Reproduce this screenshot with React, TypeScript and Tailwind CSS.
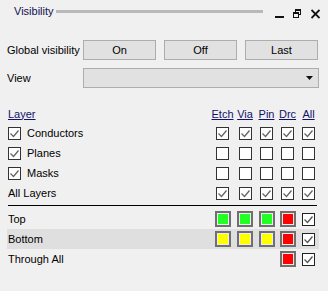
const cols = ['w-[23px]', 'w-[22px]', 'w-[21px]', 'w-[21px]', 'w-[21px]'];

const layerRows = [
  { name: 'Conductors', box: true, checks: [true, true, true, true, true] },
  { name: 'Planes', box: true, checks: [false, false, false, false, false] },
  { name: 'Masks', box: true, checks: [false, false, false, false, false] },
  { name: 'All Layers', box: false, checks: [true, true, true, true, true] },
];

const sideRows = [
  { name: 'Top', colors: ['#22ff22', '#22ff22', '#22ff22', '#ff0000'], active: false },
  { name: 'Bottom', colors: ['#ffff00', '#ffff00', '#ffff00', '#ff0000'], active: true },
  { name: 'Through All', colors: [null, null, null, '#ff0000'], active: false },
];

function Check({ on, dark }: { on: boolean; dark?: boolean }) {
  return (
    <div className={`w-[13px] h-[13px] border ${dark ? 'border-[#222]' : 'border-[#333]'} bg-white flex items-center justify-center`}>
      {on && (
        <svg width="11" height="11" viewBox="0 0 11 11">
          <polyline points="1.5,5.5 4.5,8.5 9.5,2.5" fill="none" stroke={dark ? '#555' : '#666'} strokeWidth="1.3" />
        </svg>
      )}
    </div>
  );
}

function Swatch({ color }: { color: string }) {
  return (
    <div className="w-[16px] h-[16px] border-2 border-[#6f6f6f] p-[1px] bg-[#ececec]">
      <div className="w-full h-full" style={{ backgroundColor: color }} />
    </div>
  );
}

export default function App() {
  return (
    <div
      className="w-[328px] h-[291px] bg-[#f0f0f0] text-[11px] text-black overflow-hidden"
      style={{ fontFamily: '"Liberation Sans", Arial, sans-serif' }}
    >
      {/* Title bar */}
      <div className="h-[22px] flex items-center pl-[14px]">
        <span className="text-[#101050]">Visibility</span>
        <div className="ml-[2px] w-[207px] h-[3px] bg-[#b9b9b9]" />
        <div className="ml-[12px] flex items-center">
          <svg width="9" height="16" viewBox="0 0 9 16">
            <rect x="0" y="13" width="9" height="2" fill="#111" />
          </svg>
          <svg className="ml-[9px]" width="8" height="16" viewBox="0 0 8 16">
            <rect x="2.5" y="6.5" width="5" height="5" fill="none" stroke="#111" strokeWidth="1" />
            <rect x="2" y="6" width="6" height="2" fill="#111" />
            <rect x="0.5" y="9.5" width="5" height="5" fill="#f0f0f0" stroke="#111" strokeWidth="1" />
            <rect x="0" y="9" width="6" height="2" fill="#111" />
          </svg>
          <svg className="ml-[10px]" width="9" height="16" viewBox="0 0 9 16">
            <path d="M0.5 7 L8.5 15 M8.5 7 L0.5 15" stroke="#111" strokeWidth="1.8" />
          </svg>
        </div>
      </div>

      {/* Global visibility */}
      <div className="mt-[18px] pl-[7px] flex items-center h-[20px]">
        <div className="w-[76px]">Global visibility</div>
        <div className="flex gap-[8px]">
          {['On', 'Off', 'Last'].map((b) => (
            <button key={b} className="w-[73px] h-[20px] bg-[#e1e1e1] border border-[#adadad] flex items-center justify-center">
              {b}
            </button>
          ))}
        </div>
      </div>

      {/* View */}
      <div className="mt-[8px] pl-[7px] flex items-center h-[20px]">
        <div className="w-[76px]">View</div>
        <div className="w-[236px] h-[20px] bg-[#e1e1e1] border border-[#adadad] flex items-center justify-end pr-[5px]">
          <svg width="7" height="4" viewBox="0 0 7 4">
            <polygon points="0,0 7,0 3.5,4" fill="#111" />
          </svg>
        </div>
      </div>

      {/* Layer table */}
      <div className="mt-[17px] pl-[8px] pr-[9px]">
        <div className="h-[18px] flex items-center">
          <div className="flex-1 underline text-[#10106a]">Layer</div>
          {['Etch', 'Via', 'Pin', 'Drc', 'All'].map((h, i) => (
            <div key={h} className={`${cols[i]} text-center underline text-[#10106a]`}>
              {h}
            </div>
          ))}
        </div>
        {layerRows.map((r) => (
          <div key={r.name} className="h-[20px] flex items-center">
            <div className="flex-1 flex items-center gap-[6px]">
              {r.box && <Check on={true} />}
              <span>{r.name}</span>
            </div>
            {r.checks.map((c, i) => (
              <div key={i} className={`${cols[i]} flex justify-center`}>
                <Check on={c} />
              </div>
            ))}
          </div>
        ))}
        <div className="mt-[2px] mr-[2px] h-[1px] bg-black" />
      </div>

      {/* Sides */}
      <div className="mt-[3px] ml-[7px] mr-[9px]">
        {sideRows.map((r) => (
          <div key={r.name} className={`h-[20px] flex items-center ${r.active ? 'bg-[#dfdfdf]' : ''}`}>
            <div className="flex-1 pl-[1px]">{r.name}</div>
            {r.colors.map((c, i) => (
              <div key={i} className={`${cols[i]} flex justify-center`}>
                {c && <Swatch color={c} />}
              </div>
            ))}
            <div className={`${cols[4]} flex justify-center`}>
              <Check on={true} dark />
            </div>
          </div>
        ))}
      </div>
    </div>
  );
}
